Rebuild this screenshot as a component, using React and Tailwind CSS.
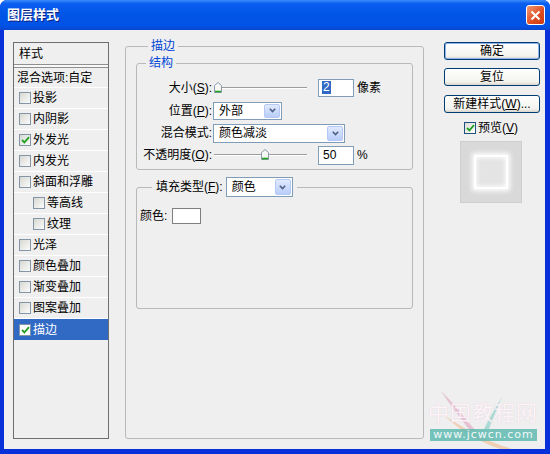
import React from 'react';

const listItems = [
  { label: '投影' },
  { label: '内阴影' },
  { label: '外发光', checked: true },
  { label: '内发光' },
  { label: '斜面和浮雕' },
  { label: '等高线', indent: true },
  { label: '纹理', indent: true },
  { label: '光泽' },
  { label: '颜色叠加' },
  { label: '渐变叠加' },
  { label: '图案叠加' },
  { label: '描边', checked: true, selected: true },
];

const CheckMark = () => (
  <svg width="9" height="8" viewBox="0 0 9 8">
    <path d="M1 4 L3.4 6.4 L8 1.2" fill="none" stroke="#21a121" strokeWidth="1.8" />
  </svg>
);

const Check = ({ checked, white }) => (
  <span
    className={`w-[12px] h-[12px] shrink-0 border border-[#8595a8] flex items-center justify-center ${
      white ? 'bg-white' : 'bg-[linear-gradient(135deg,#d8d8d2,#fbfbfb)]'
    }`}
  >
    {checked && <CheckMark />}
  </span>
);

const Thumb = () => (
  <svg width="8" height="11" viewBox="0 0 8 11">
    <path d="M0.5 10.5 V3.5 L4 0.5 L7.5 3.5 V10.5 Z" fill="#f7f7f4" stroke="#8a9aa8" />
    <path d="M1 9.5 H7" stroke="#21a121" strokeWidth="1.6" />
  </svg>
);

const Slider = ({ pos }) => (
  <div className="relative ml-[2px] w-[93px] h-[12px] flex items-center">
    <div className="w-full h-[2px] border-t border-[#9d9d9d] border-b border-b-white" />
    <div className="absolute top-0" style={{ left: pos }}>
      <Thumb />
    </div>
  </div>
);

const Select = ({ value, w, h }) => (
  <div className={`flex border border-[#7f9db9] bg-white ${w} ${h}`}>
    <span className="flex-1 pl-[5px] flex items-center leading-none">{value}</span>
    <span className="w-[16px] m-[1px] rounded-[2px] border border-[#b6c8f5] bg-[linear-gradient(to_bottom,#e0e9fd,#b9cdf9)] flex items-center justify-center">
      <svg width="7" height="5" viewBox="0 0 7 5">
        <path d="M0.8 0.8 L3.5 3.6 L6.2 0.8" fill="none" stroke="#4d6185" strokeWidth="1.6" />
      </svg>
    </span>
  </div>
);

const XPButton = ({ children, def, className = '' }) => (
  <div
    className={`h-[18px] rounded-[3px] border border-[#003c74] bg-[linear-gradient(to_bottom,#ffffff,#f3f3ee_80%,#d8d4ca)] flex items-center justify-center leading-none ${
      def ? 'shadow-[inset_0_0_0_1px_#8fb0ec]' : ''
    } ${className}`}
  >
    {children}
  </div>
);

const Watermark = () => (
  <div className="absolute left-[410px] top-[355px] w-[132px] h-[64px] pointer-events-none">
    <svg className="absolute inset-0" width="132" height="64" viewBox="0 0 132 64">
      <path d="M27 6 C38 16 48 30 62 46 L56 46 C46 32 36 20 27 6 Z" fill="#d98bb0" opacity="0.45" />
      <path d="M88 12 C82 22 76 32 70 44 L75 44 C79 32 84 22 88 12 Z" fill="#69c4bc" opacity="0.5" />
      <path d="M30 30 C50 44 72 56 98 64 L86 64 C64 56 46 46 30 30 Z" fill="#f0b27a" opacity="0.5" />
    </svg>
    <div className="absolute left-[14px] top-[17px] text-[21px] leading-[22px] tracking-[1px] text-white/80 [text-shadow:0_0_1px_rgba(220,150,190,0.5)]">
      中国教程网
    </div>
    <div className="absolute left-[16px] top-[44px] w-[107px] h-[12px] bg-[#5fbab2]/85 text-[11px] leading-[12px] text-white/90 tracking-[1px] text-center font-['DejaVu_Sans',sans-serif]">
      www.jcwcn.com
    </div>
  </div>
);

export default function App() {
  return (
    <div className="w-[550px] h-[454px] flex flex-col bg-[#0831d9] rounded-t-[7px] overflow-hidden text-[12px] text-black font-['Liberation_Sans','Noto_Sans_CJK_SC',sans-serif]">
      {/* title bar */}
      <div className="h-[30px] shrink-0 flex items-center bg-[linear-gradient(to_bottom,#3b8cf8_0%,#0a5ef0_12%,#0055e5_50%,#0153e6_85%,#0a46cf_100%)]">
        <span className="pl-[7px] text-[13px] font-bold text-white [text-shadow:1px_1px_0_#0a1f80]">图层样式</span>
        <div className="ml-auto mr-[5px] w-[19px] h-[20px] rounded-[3px] border border-white bg-[linear-gradient(135deg,#f09a72,#de4b1f_60%,#c93a12)] flex items-center justify-center">
          <svg width="11" height="11" viewBox="0 0 11 11">
            <path d="M1.5 1.5 L9.5 9.5 M9.5 1.5 L1.5 9.5" stroke="white" strokeWidth="2" />
          </svg>
        </div>
      </div>

      {/* body */}
      <div className="flex-1 ml-[4px] mr-[5px] mb-[5px] bg-[#efefef] relative flex items-start pt-[10px] pl-[9px]">
        {/* style list */}
        <div className="mt-[2px] w-[96px] h-[397px] border border-[#6e6e6e] bg-[#efefef] flex flex-col">
          <div className="h-[21px] pl-[5px] flex items-center">样式</div>
          <div className="h-[4px] border-y border-[#8f8f8f] bg-[#f8f8f8]" />
          <div className="h-[20px] pl-[3px] flex items-center border-b border-white">混合选项:自定</div>
          {listItems.map((it) => (
            <div
              key={it.label}
              className={`h-[21px] flex items-center gap-[2px] ${it.indent ? 'pl-[19px]' : 'pl-[5px]'} ${
                it.selected ? 'bg-[#316ac5] text-white' : 'border-b border-white'
              }`}
            >
              <Check checked={it.checked} white={it.selected} />
              <span>{it.label}</span>
            </div>
          ))}
        </div>

        {/* main group */}
        <fieldset className="ml-[16px] w-[296px] h-[399px] border border-[#b9b9b9] rounded-[3px] px-[10px]">
          <legend className="ml-[12px] px-[3px] leading-[13px] text-[#0046d5]">描边</legend>

          <fieldset className="mt-[4px] w-[277px] h-[113px] border border-[#b9b9b9] rounded-[3px]">
            <legend className="ml-[9px] px-[3px] leading-[13px] text-[#0046d5]">结构</legend>
            <div className="mt-[6px] flex flex-col">
              <div className="h-[23px] flex items-center">
                <span className="w-[75px] text-right">大小(<u>S</u>):</span>
                <Slider pos={0} />
                <div className="ml-[11px] w-[36px] h-[18px] border border-[#7f9db9] bg-white flex items-center pl-[3px]">
                  <span className="bg-[#316ac5] text-white leading-[13px] px-[1px]">2</span>
                </div>
                <span className="ml-[3px]">像素</span>
              </div>
              <div className="h-[23px] flex items-center">
                <span className="w-[75px] text-right">位置(<u>P</u>):</span>
                <div className="ml-[1px]">
                  <Select value="外部" w="w-[69px]" h="h-[18px]" />
                </div>
              </div>
              <div className="h-[22px] flex items-center">
                <span className="w-[75px] text-right">混合模式:</span>
                <div className="ml-[1px]">
                  <Select value="颜色减淡" w="w-[132px]" h="h-[19px]" />
                </div>
              </div>
              <div className="h-[22px] flex items-center">
                <span className="w-[75px] text-right">不透明度(<u>O</u>):</span>
                <Slider pos={47} />
                <div className="ml-[11px] w-[36px] h-[19px] border border-[#7f9db9] bg-white flex items-center pl-[4px]">
                  50
                </div>
                <span className="ml-[3px]">%</span>
              </div>
            </div>
          </fieldset>

          <fieldset className="mt-[7px] w-[277px] h-[132px] border border-[#b9b9b9] rounded-[3px]">
            <legend className="ml-[15px] px-[4px]">
              <div className="flex items-center">
                <span>填充类型(<u>F</u>):</span>
                <div className="ml-[3px]">
                  <Select value="颜色" w="w-[67px]" h="h-[20px]" />
                </div>
              </div>
            </legend>
            <div className="mt-[10px] pl-[3px] flex items-center">
              <span>颜色:</span>
              <span className="ml-[5px] w-[29px] h-[16px] border border-[#7f7f7f] bg-white" />
            </div>
          </fieldset>
        </fieldset>

        {/* buttons */}
        <div className="ml-[20px] w-[96px] flex flex-col">
          <XPButton def className="mt-[2px]">确定</XPButton>
          <XPButton className="mt-[8px]">复位</XPButton>
          <XPButton className="mt-[9px]">
            新建样式(<u>W</u>)...
          </XPButton>
          <div className="mt-[8px] h-[14px] pl-[20px] flex items-center gap-[2px]">
            <span className="w-[12px] h-[12px] border border-[#1c5180] bg-[linear-gradient(135deg,#dcdcd7,#ffffff)] flex items-center justify-center">
              <CheckMark />
            </span>
            <span>
              预览(<u>V</u>)
            </span>
          </div>
          <div className="mt-[6px] ml-[16px] w-[62px] h-[62px] bg-[#d9d9d9] border border-[#cfcfcf] flex items-center justify-center">
            <div className="w-[34px] h-[34px] border-2 border-white bg-[#e4e4e4] shadow-[0_0_5px_2px_rgba(255,255,255,0.95),inset_0_0_4px_1px_rgba(255,255,255,0.9)]" />
          </div>
        </div>

        <Watermark />
      </div>
    </div>
  );
}
